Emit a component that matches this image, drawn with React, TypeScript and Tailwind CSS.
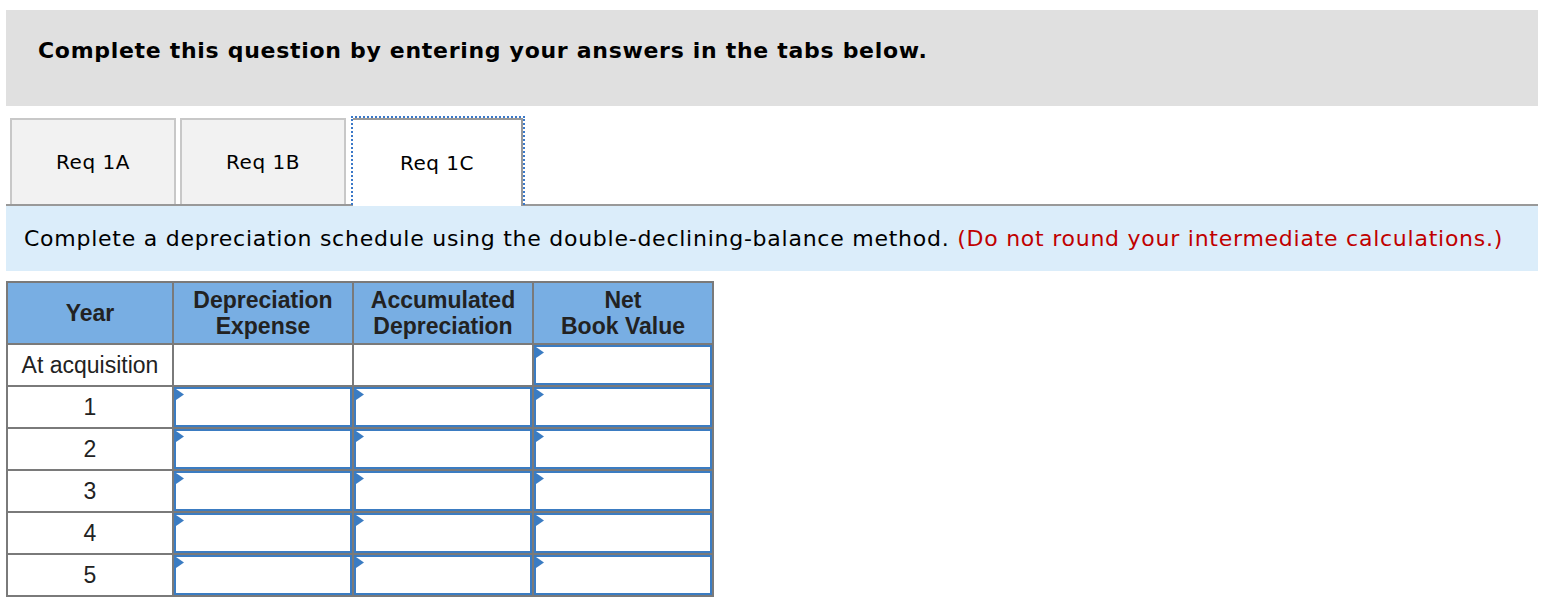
import React from "react";

const verdana = { fontFamily: "'DejaVu Sans', Verdana, sans-serif" };
const arial = { fontFamily: "'Liberation Sans', Arial, sans-serif" };

const tabs = ["Req 1A", "Req 1B", "Req 1C"];
const years = ["1", "2", "3", "4", "5"];

const Entry: React.FC = () => (
  <div className="relative h-[40px] w-full border-2 border-[#3b7cc2] bg-white">
    <svg
      className="absolute left-0 top-0"
      width="8"
      height="11"
      viewBox="0 0 8 11"
    >
      <polygon points="0,0 8,5.5 0,11" fill="#3b7cc2" />
    </svg>
  </div>
);

const Blank: React.FC = () => <div className="h-[40px] w-full" />;

export default function App() {
  return (
    <div className="min-h-[600px] bg-white pt-[10px]" style={verdana}>
      <div className="ml-[6px] mr-[18px] flex h-[96px] items-start bg-[#e0e0e0] pl-[32px] pt-[24px]">
        <h2 className="text-[22px] font-bold tracking-[0.7px] text-black">
          Complete this question by entering your answers in the tabs below.
        </h2>
      </div>

      <div className="ml-[6px] mr-[18px] mt-[12px] flex items-end border-b-2 border-[#999] pl-[4px]">
        {tabs.map((t, i) =>
          i === 2 ? (
            <div
              key={t}
              className="-mb-[2px] ml-[3px] flex h-[88px] w-[170px] items-center justify-center border-r-2 border-t-2 border-[#999] bg-white text-[20px] tracking-[0.5px] text-black outline-2 outline-dotted outline-[#3a78c8]"
            >
              {t}
            </div>
          ) : (
            <div
              key={t}
              className="mr-[4px] flex h-[86px] w-[166px] items-center justify-center border-2 border-b-0 border-[#c8c8c8] bg-[#f2f2f2] text-[20px] tracking-[0.5px] text-black"
            >
              {t}
            </div>
          )
        )}
      </div>

      <div className="relative z-10 ml-[6px] mr-[18px] flex h-[65px] items-center bg-[#dbedfa] pl-[18px] text-[22px] tracking-[0.75px] text-black">
        <p>
          Complete a depreciation schedule using the double-declining-balance
          method.{" "}
          <span className="text-[#c00000]">
            (Do not round your intermediate calculations.)
          </span>
        </p>
      </div>

      <div className="ml-[6px] mt-[10px]" style={arial}>
        <table className="border-collapse border-2 border-[#7a7a7a] text-[#222]">
          <thead>
            <tr className="h-[62px] bg-[#78aee3] text-[23px] font-bold leading-[26px]">
              <th className="w-[166px] border-2 border-[#7a7a7a]">Year</th>
              <th className="w-[180px] border-2 border-[#7a7a7a]">
                Depreciation
                <br />
                Expense
              </th>
              <th className="w-[180px] border-2 border-[#7a7a7a]">
                Accumulated
                <br />
                Depreciation
              </th>
              <th className="w-[180px] border-2 border-[#7a7a7a]">
                Net
                <br />
                Book Value
              </th>
            </tr>
          </thead>
          <tbody className="text-[23px]">
            <tr className="h-[42px]">
              <td className="border-2 border-[#7a7a7a] p-0 text-center">At acquisition</td>
              <td className="border-2 border-[#7a7a7a] p-0">
                <Blank />
              </td>
              <td className="border-2 border-[#7a7a7a] p-0">
                <Blank />
              </td>
              <td className="border-2 border-[#7a7a7a] p-0">
                <Entry />
              </td>
            </tr>
            {years.map((y) => (
              <tr key={y} className="h-[42px]">
                <td className="border-2 border-[#7a7a7a] p-0 text-center">{y}</td>
                <td className="border-2 border-[#7a7a7a] p-0">
                  <Entry />
                </td>
                <td className="border-2 border-[#7a7a7a] p-0">
                  <Entry />
                </td>
                <td className="border-2 border-[#7a7a7a] p-0">
                  <Entry />
                </td>
              </tr>
            ))}
          </tbody>
        </table>
      </div>
    </div>
  );
}
